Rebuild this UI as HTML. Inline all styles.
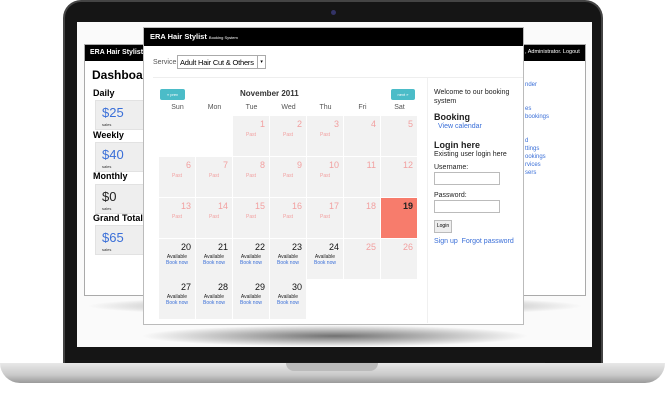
<!DOCTYPE html>
<html><head><style>
*{margin:0;padding:0;box-sizing:border-box}
body{width:665px;height:402px;background:#fff;position:relative;overflow:hidden;font-family:"Liberation Sans",sans-serif}
.a{position:absolute;white-space:nowrap}
.lid{left:63px;top:0;width:540px;height:368px;background:#151515;border-radius:18px 18px 0 0;border:2px solid #444;border-bottom:none}
.screen{left:77px;top:22px;width:515px;height:325px;background:#fafafa}
.base{left:0;top:363px;width:665px;height:20px;background:linear-gradient(#e8e8e8,#c9c9c9 60%,#9a9a9a);border-radius:0 0 40px 40px}
.notch{left:286px;top:363px;width:92px;height:8px;background:#bbb;border-radius:0 0 8px 8px}
.back{left:84px;top:44px;width:502px;height:252px;background:#fff;border:1px solid #aaa}
.bh{left:0;top:0;width:100%;height:16px;background:#000;color:#fff;font-size:7px;font-weight:bold;padding:4px 5px}
.box{background:#eee;width:60px;height:30px;left:10px;border:1px solid #e2e2e2}
.box b{color:#3a6fd8;font-weight:normal;font-size:13px;position:absolute;left:6px;top:4px}
.box i{font-style:normal;font-size:4px;position:absolute;left:6px;top:21px;color:#333}
.lbl{font-size:9px;font-weight:bold;left:8px}
.front{left:143px;top:27px;width:381px;height:298px;background:#fff;border:1px solid #bbb}
.fh{left:0;top:0;width:100%;height:18px;background:#000;color:#fff;font-size:7.5px;font-weight:bold;padding:4px 6px}
.c{width:36px;height:40px;background:#f2f2f2;text-align:right;padding:3px 4px;font-size:9px;color:#f2a0a0}
.c s{text-decoration:none;display:block;text-align:center;font-size:5px;margin-top:3px}
.c.av{color:#111}
.c.av s{color:#222;font-size:5px;margin-top:2px;line-height:6px}
.c.av s u{text-decoration:none;color:#3a6fd8;display:block}
.dh{font-size:7px;color:#555;width:37px;text-align:center;top:104px}
.sb{font-size:7px;color:#222;left:434px}
.lk{color:#3a6fd8}
.shadow{background:radial-gradient(ellipse at center,rgba(0,0,0,.55),rgba(0,0,0,0) 70%)}
</style></head><body>
<div class="a lid"></div>
<div class="a" style="left:331px;top:10px;width:5px;height:5px;border-radius:50%;background:#336"></div>
<div class="a screen"></div>
<div class="a" style="left:120px;top:362px;width:425px;height:4px;background:#1a1a1a"></div>
<div class="a base"></div>
<div class="a notch"></div>
<div class="a shadow" style="left:85px;top:296px;width:500px;height:20px"></div>
<div class="a shadow" style="left:140px;top:325px;width:390px;height:22px"></div>
<div class="a back">
 <div class="a bh">ERA Hair Stylist</div>
 <div class="a" style="left:7px;top:23px;font-size:12px;font-weight:bold">Dashboard</div>
 <div class="a lbl" style="top:43px">Daily</div>
 <div class="a box" style="top:55px"><b>$25</b><i>sales</i></div>
 <div class="a lbl" style="top:85px">Weekly</div>
 <div class="a box" style="top:97px"><b>$40</b><i>sales</i></div>
 <div class="a lbl" style="top:126px">Monthly</div>
 <div class="a box" style="top:139px"><b style="color:#222">$0</b><i>sales</i></div>
 <div class="a lbl" style="top:168px">Grand Total</div>
 <div class="a box" style="top:180px"><b>$65</b><i>sales</i></div>
 <div class="a" style="left:440px;top:4px;color:#fff;font-size:5.5px">, Administrator. Logout</div>
 <div class="a lk" style="left:440px;top:36px;font-size:6px;line-height:8px">nder<br><br><br>es<br>bookings<br><br><br>d<br>ttings<br>ookings<br>rvices<br>sers</div>
</div>
<div class="a front">
 <div class="a fh">ERA Hair Stylist <span style="font-size:4px;font-weight:normal">Booking System</span></div>
</div>
<div class="a" style="left:153px;top:59px;font-size:7px;color:#555">Service:</div>
<div class="a" style="left:177px;top:55px;width:89px;height:14px;border:1px solid #aaa;font-size:7.5px;letter-spacing:-0.2px;padding:2px 2px;background:#fff;overflow:hidden">Adult Hair Cut &amp; Others<span style="position:absolute;right:0;top:0;width:8px;height:12px;border-left:1px solid #aaa;font-size:5px;text-align:center;line-height:12px;background:#fff">▾</span></div>
<div class="a" style="left:153px;top:77px;width:370px;height:1px;background:#eee"></div>
<div class="a" style="left:427px;top:78px;width:1px;height:245px;background:#f0f0f0"></div>
<div class="a" style="left:160px;top:89px;width:25px;height:11px;background:#4bbcc8;border-radius:2px;color:#fff;font-size:4px;text-align:center;line-height:11px">« prev</div>
<div class="a" style="left:391px;top:89px;width:24px;height:11px;background:#4bbcc8;border-radius:2px;color:#fff;font-size:4px;text-align:center;line-height:11px">next »</div>
<div class="a" style="left:240px;top:89px;font-size:8px;font-weight:bold;color:#333">November 2011</div>
<div class="a dh" style="left:159px">Sun</div><div class="a dh" style="left:196px">Mon</div><div class="a dh" style="left:233px">Tue</div><div class="a dh" style="left:270px">Wed</div><div class="a dh" style="left:307px">Thu</div><div class="a dh" style="left:344px">Fri</div><div class="a dh" style="left:381px">Sat</div>
<div class="a c" style="left:233px;top:116px">1<s>Past</s></div>
<div class="a c" style="left:270px;top:116px">2<s>Past</s></div>
<div class="a c" style="left:307px;top:116px">3<s>Past</s></div>
<div class="a c" style="left:344px;top:116px">4</div>
<div class="a c" style="left:381px;top:116px">5</div>
<div class="a c" style="left:159px;top:157px">6<s>Past</s></div>
<div class="a c" style="left:196px;top:157px">7<s>Past</s></div>
<div class="a c" style="left:233px;top:157px">8<s>Past</s></div>
<div class="a c" style="left:270px;top:157px">9<s>Past</s></div>
<div class="a c" style="left:307px;top:157px">10<s>Past</s></div>
<div class="a c" style="left:344px;top:157px">11</div>
<div class="a c" style="left:381px;top:157px">12</div>
<div class="a c" style="left:159px;top:198px">13<s>Past</s></div>
<div class="a c" style="left:196px;top:198px">14<s>Past</s></div>
<div class="a c" style="left:233px;top:198px">15<s>Past</s></div>
<div class="a c" style="left:270px;top:198px">16<s>Past</s></div>
<div class="a c" style="left:307px;top:198px">17<s>Past</s></div>
<div class="a c" style="left:344px;top:198px">18</div>
<div class="a c" style="left:381px;top:198px;background:#f77c6c;color:#222;font-weight:bold">19</div>
<div class="a c av" style="left:159px;top:239px">20<s>Available<u>Book now</u></s></div>
<div class="a c av" style="left:196px;top:239px">21<s>Available<u>Book now</u></s></div>
<div class="a c av" style="left:233px;top:239px">22<s>Available<u>Book now</u></s></div>
<div class="a c av" style="left:270px;top:239px">23<s>Available<u>Book now</u></s></div>
<div class="a c av" style="left:307px;top:239px">24<s>Available<u>Book now</u></s></div>
<div class="a c" style="left:344px;top:239px">25</div>
<div class="a c" style="left:381px;top:239px">26</div>
<div class="a c av" style="left:159px;top:279px">27<s>Available<u>Book now</u></s></div>
<div class="a c av" style="left:196px;top:279px">28<s>Available<u>Book now</u></s></div>
<div class="a c av" style="left:233px;top:279px">29<s>Available<u>Book now</u></s></div>
<div class="a c av" style="left:270px;top:279px">30<s>Available<u>Book now</u></s></div>
<div class="a sb" style="top:88px;line-height:9px">Welcome to our booking<br>system</div>
<div class="a sb" style="top:112px;font-size:9px;font-weight:bold">Booking</div>
<div class="a sb lk" style="top:123px;left:438px">View calendar</div>
<div class="a sb" style="top:140px;font-size:9px;font-weight:bold">Login here</div>
<div class="a sb" style="top:151px">Existing user login here</div>
<div class="a sb" style="top:164px">Username:</div>
<div class="a" style="left:434px;top:172px;width:66px;height:13px;border:1px solid #bbb;background:#fff"></div>
<div class="a sb" style="top:192px">Password:</div>
<div class="a" style="left:434px;top:200px;width:66px;height:13px;border:1px solid #bbb;background:#fff"></div>
<div class="a" style="left:434px;top:220px;width:18px;height:13px;border:1px solid #bbb;background:#eee;font-size:5px;text-align:center;line-height:11px">Login</div>
<div class="a sb lk" style="top:238px">Sign up &nbsp;Forgot password</div>
</body></html>
